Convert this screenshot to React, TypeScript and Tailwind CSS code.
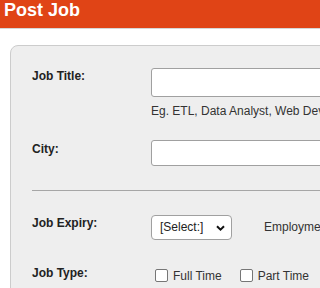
import React from "react";

function Check({ label }: { label: string }) {
  return (
    <label className="flex items-start">
      <span className="h-[13px] w-[13px] rounded-[2px] border border-[#767676] bg-white" />
      <span className="ml-[5px] text-[12px] leading-[15px] text-[#333]">{label}</span>
    </label>
  );
}

export default function App() {
  return (
    <div
      className="h-screen w-screen overflow-hidden bg-white"
      style={{ fontFamily: '"Liberation Sans", Arial, sans-serif' }}
    >
      <header className="h-[29px] border-b border-[#d6d6d6] bg-[#e04416] px-[4px]">
        <h1 className="text-[18px] font-bold leading-[20px] text-white">Post Job</h1>
      </header>

      <div className="ml-[10px] mt-[16px] w-[440px] rounded-[8px] border border-[#cccccc] bg-[#eeeeee] pb-6 pl-[21px] pt-[22px]">
        {/* Job Title */}
        <div className="flex items-start">
          <div className="mt-px w-[119px] text-[12px] font-bold leading-[15px] text-[#222]">Job Title:</div>
          <div>
            <div className="h-[29px] w-[280px] rounded-[3px] border border-[#a0a0a0] bg-white" />
            <div className="mt-[7px] whitespace-nowrap text-[12px] leading-[15px] text-[#333]">
              Eg. ETL, Data Analyst, Web Developer
            </div>
          </div>
        </div>

        {/* City */}
        <div className="mt-[21px] flex items-start">
          <div className="mt-[2px] w-[119px] text-[12px] font-bold leading-[15px] text-[#222]">City:</div>
          <div className="h-[26px] w-[280px] rounded-[3px] border border-[#a0a0a0] bg-white" />
        </div>

        <hr className="mt-[24px] border-0 border-t border-[#a6a6a6]" />

        {/* Job Expiry */}
        <div className="mt-[24px] flex items-start">
          <div className="mt-px w-[119px] text-[12px] font-bold leading-[15px] text-[#222]">Job Expiry:</div>
          <div className="flex h-[25px] w-[81px] items-center justify-between rounded-[4px] border border-[#a0a0a0] bg-white pl-[8px] pr-[5px]">
            <span className="text-[12px] leading-[15px] text-[#222]">[Select:]</span>
            <svg width="9" height="6" viewBox="0 0 9 6" className="mr-[1px]">
              <path d="M1 1.2 L4.5 4.6 L8 1.2" fill="none" stroke="#111" strokeWidth="2" />
            </svg>
          </div>
          <div className="ml-[32px] mt-[5px] whitespace-nowrap text-[12px] leading-[15px] text-[#333]">Employment Type:</div>
        </div>

        {/* Job Type */}
        <div className="mt-[26px] flex items-start">
          <div className="w-[119px] text-[12px] font-bold leading-[15px] text-[#222]">Job Type:</div>
          <div className="ml-[4px] mt-[3px] flex gap-[18px] whitespace-nowrap">
            <Check label="Full Time" />
            <Check label="Part Time" />
          </div>
        </div>
      </div>
    </div>
  );
}
